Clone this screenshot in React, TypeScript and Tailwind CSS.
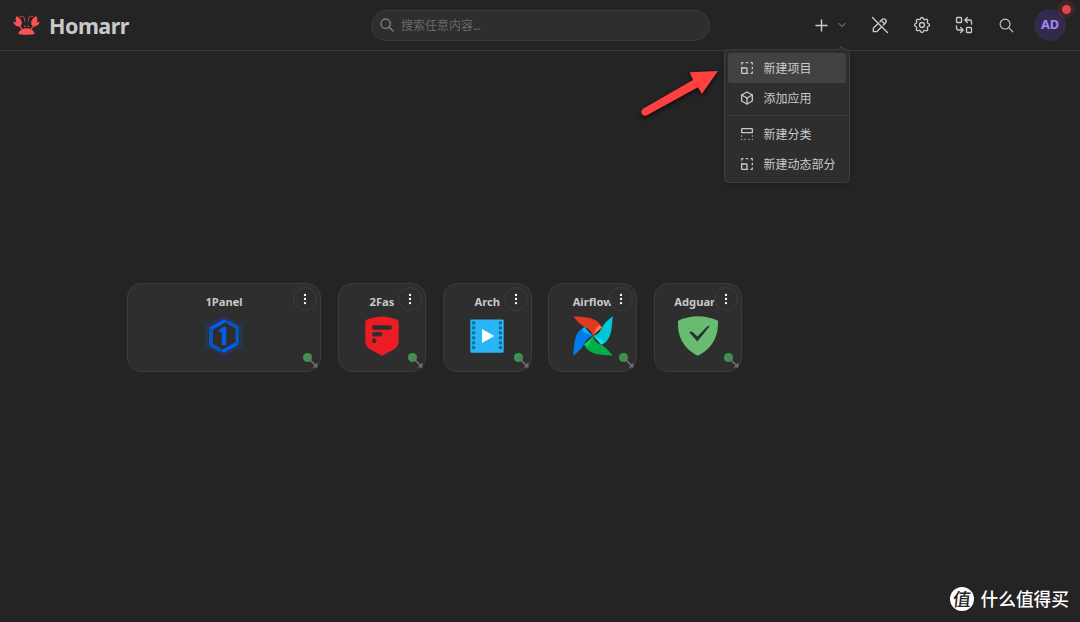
import type { ReactNode } from 'react';
import {
  TbBox,
  TbBoxAlignTop,
  TbChevronDown,
  TbDotsVertical,
  TbPencilOff,
  TbPlus,
  TbReplace,
  TbResize,
  TbSearch,
  TbSettings,
} from 'react-icons/tb';

function HomarrLogo() {
  return (
    <svg viewBox="0 0 28 20" className="h-5 w-7" fill="#fa5252">
      <path d="M5.3 19c.6-3.600 3.800-5.800 8.200-5.800s7.700 2.200 8.200 5.800c-2 .9-14.400.9-16.400 0z" />
      <path d="M3.600 1.200C5.600 2 8.600 4.200 8.800 7.300c.1 2-.7 3.600-1.900 4.200C3.300 11.600.3 9.300.5 6.400l2.900 1.100C2.300 5.300 2.400 2.700 3.600 1.200z" />
      <path d="M23.400 1.200c-2 .8-5 3-5.200 6.100-.1 2 .7 3.600 1.900 4.200 3.600.1 6.600-2.200 6.400-5.100l-2.900 1.100c1.100-2.200 1-4.800-.2-6.300z" />
      <path d="M6.500 2.200C8.500.4 12 .6 11.700 6.500M20.500 2.200C18.500.4 15 .6 15.300 6.500" fill="none" stroke="#fa5252" strokeWidth=".8" />
      <path d="M6.800 11.300l2.400 3M20.200 11.300l-2.400 3" stroke="#fa5252" strokeWidth="1.200" />
      <circle cx="11.700" cy="11.200" r=".7" />
      <circle cx="15.300" cy="11.200" r=".7" />
    </svg>
  );
}

function PanelIcon() {
  return (
    <svg viewBox="0 0 40 40" className="size-10">
      <path d="M20 .7 37.200 10.300v19.400L20 39.300 2.800 29.700V10.300z" fill="none" stroke="#0854c1" strokeWidth=".6" />
      <path d="M5 11.400 20 3l3.800 2.200L8.600 13.800v13.600L5 29.500z" fill="#005eeb" />
      <path d="M5 11.400l3.600 2.400v13.600l9 5.400-1.600 3.200L5 29.500z" fill="#0854c1" />
      <path d="M35 28.600 20 37l-3.800-2.200 15.200-8.600z" fill="#005eeb" />
      <path d="M35 28.600l-3.600-2.400V12.600l-9-5.400L24 4.300l11 6.500z" fill="#0854c1" />
      <path d="M14.800 14.200l4.700-3.200h2.700v18h-4.400V16h-3z" fill="#005eeb" />
    </svg>
  );
}

function TwoFasIcon() {
  return (
    <svg viewBox="0 0 40 40" className="size-10">
      <path
        d="M20 .5c4.300.1 9.500 1.300 14 2.700 2 .7 2.700 1.700 2.700 3.600v17.400c0 4.600-2.200 7.600-6 9.800L20 39.800 9.300 34c-3.800-2.200-6-5.200-6-9.800V6.800c0-1.900.7-2.900 2.700-3.600C10.500 1.800 15.700.6 20 .5z"
        fill="#ed1c24"
      />
      <path d="M12.200 11.500h15.600M12.200 18.300h5.700M12.200 24.800h.1" stroke="#2e2e2e" strokeWidth="4.400" strokeLinecap="round" />
    </svg>
  );
}

const filmHoles = [5.200, 10.200, 15.200, 20.200, 25.200, 30];

function ArchIcon() {
  return (
    <svg viewBox="0 0 40 40" className="size-10">
      <rect x="3.300" y="3.500" width="33.400" height="33.200" rx="1" fill="#29b6f6" />
      {filmHoles.map((y) => (
        <g key={y} fill="#0b6ea0">
          <rect x="5" y={y} width="3.200" height="3.200" rx="1" />
          <rect x="31.800" y={y} width="3.200" height="3.200" rx="1" />
        </g>
      ))}
      <path d="M15 13l12.200 7L15 27z" fill="#fff" />
    </svg>
  );
}

const blades = [
  { angle: 0, dark: '#e43921', light: '#ff7557' },
  { angle: 90, dark: '#00c7d4', light: '#11e1ee' },
  { angle: 180, dark: '#00ad46', light: '#04d659' },
  { angle: 270, dark: '#017cee', light: '#0cb6ff' },
];

function AirflowIcon() {
  return (
    <svg viewBox="0 0 40 40" className="size-10">
      {blades.map(({ angle, dark, light }) => (
        <g key={angle} transform={`rotate(${angle} 20 20)`}>
          <path d="M20 20c.5-4 .5-7 3.500-12 2.500.2 4.500 1.500 5.500 3.500-2 2-6 4.500-9 8.500z" fill={light} />
          <path d="M.3.300C9 1.200 23 .3 28.300 10.300 25.500 8.500 24 10.500 23 13c-.8 2-1.500 4-3 7-1-4-3-6.500-7.500-8.500C8 9.200 3.500 5 .3.300z" fill={dark} />
        </g>
      ))}
      <circle cx="20" cy="20" r=".9" fill="#51504f" />
    </svg>
  );
}

function AdguardIcon() {
  return (
    <svg viewBox="0 0 40 40" className="size-10">
      <path d="M20 .3C26.500.3 34 1.800 40 4.800c0 6.700.8 24.200-20 35C-.8 29-.1 11.500 0 4.800 6 1.800 13.500.3 20 .3z" fill="#68bc71" />
      <path d="M19.300 25.500 11.300 16.200c1-.9 2.600-.8 3.500 0l4.700 4.300 9.700-9.900c.7-.7 1.700-.9 2.500-.4z" fill="#2e2e2e" />
    </svg>
  );
}

interface AppItem {
  name: string;
  icon: ReactNode;
  wide?: boolean;
}

const apps: AppItem[] = [
  { name: '1Panel', icon: <PanelIcon />, wide: true },
  { name: '2Fas', icon: <TwoFasIcon /> },
  { name: 'Arch', icon: <ArchIcon /> },
  { name: 'Airflow', icon: <AirflowIcon /> },
  { name: 'Adguard', icon: <AdguardIcon /> },
];

function AppCard({ name, icon, wide = false }: AppItem) {
  return (
    <div
      className={`relative flex h-[89px] shrink-0 flex-col items-center rounded-[14px] border border-[#3b3b3b] bg-[#2e2e2e] pt-[10px] ${
        wide ? 'w-[193.500px]' : 'w-[88.500px]'
      }`}
    >
      <span className="mb-[6px] text-[11.200px] leading-4 font-bold">{name}</span>
      {icon}
      <button className="absolute top-[3px] right-[3px] flex size-6 items-center justify-center rounded-full border border-[#3d3d3d] bg-[#2e2e2e] text-white">
        <TbDotsVertical className="size-3.5" strokeWidth={2} />
      </button>
      <span className="absolute right-2 bottom-[8.500px] size-[9px] rounded-full bg-[#2f9e44]" />
      <svg viewBox="0 0 12 12" className="absolute right-[2px] bottom-[2.500px] size-3" fill="#6e6e6e">
        <path d="M2.500 2.500l7 7" stroke="#6e6e6e" strokeWidth="1.700" />
        <path d="M0 .500h5.500L.5 6zM11.500 11.500H6.500l5-5z" />
      </svg>
    </div>
  );
}

function MenuItem({ icon, label, active = false }: { icon: ReactNode; label: string; active?: boolean }) {
  return (
    <div className={`flex h-[29.700px] items-center gap-[8.500px] rounded-[3px] pl-[11px] text-[12px] ${active ? 'bg-[#424242]' : ''}`}>
      {icon}
      <span className="pt-[2px] whitespace-nowrap">{label}</span>
    </div>
  );
}

function CreateMenu() {
  return (
    <div className="absolute top-[49px] left-[724px] h-[134px] w-[125.500px] rounded-[4px] border border-[#3d3d3d] bg-[#2e2e2e] p-[3px] shadow-md">
      <span className="absolute -top-[3px] right-[5px] size-[5px] rotate-45 border-t border-l border-[#424242] bg-[#2e2e2e]" />
      <MenuItem icon={<TbResize className="size-4" strokeWidth={2} />} label="新建项目" active />
      <MenuItem icon={<TbBox className="size-4" strokeWidth={2} />} label="添加应用" />
      <div className="my-[3px] h-px bg-[#3d3d3d]" />
      <MenuItem icon={<TbBoxAlignTop className="size-4" strokeWidth={2} />} label="新建分类" />
      <MenuItem icon={<TbResize className="size-4" strokeWidth={2} />} label="新建动态部分" />
    </div>
  );
}

function Header() {
  return (
    <header className="flex h-[51px] items-center border-b border-[#3b3b3b] pl-[13px]">
      <div className="flex w-[358px] items-center gap-2">
        <HomarrLogo />
        <span className="pt-[2px] text-[21.500px] leading-none font-bold tracking-[-0.500px]">Homarr</span>
      </div>
      <div className="flex h-[31px] w-[339px] items-center rounded-full border border-[#3b3b3b] bg-[#2e2e2e] pl-[7px] text-[#696969]">
        <TbSearch className="mr-1.5 size-4 text-[#828282]" />
        <span className="pt-[2px] text-[12px]">
          搜索任意内容<span className="tracking-[-0.900px]">...</span>
        </span>
      </div>
      <div className="ml-[102px] flex items-center">
        <TbPlus className="size-[19px]" strokeWidth={1.800} />
        <TbChevronDown className="ml-[4.500px] size-3 text-[#969696]" />
        <TbPencilOff className="ml-[22.500px] size-5" strokeWidth={1.600} />
        <TbSettings className="ml-[22px] size-5" strokeWidth={1.600} />
        <TbReplace className="ml-[22px] size-5" strokeWidth={1.600} />
        <TbSearch className="ml-[24px] size-[17px]" strokeWidth={1.600} />
        <div className="relative ml-[19px] flex size-8 items-center justify-center rounded-full bg-[#33294a] text-[12.800px] font-bold text-[#a585fb]">
          AD
          <span className="absolute -top-[9px] -right-[9px] flex size-[18px] items-center justify-center rounded-full bg-[#e03131]/15">
            <span className="size-[9px] rounded-full bg-[#e04545]" />
          </span>
        </div>
      </div>
    </header>
  );
}

function PointerArrow() {
  return (
    <svg viewBox="0 0 90 60" className="absolute top-[64px] left-[635px] h-[60px] w-[90px] drop-shadow-[0_2px_2px_rgba(0,0,0,0.700)]">
      <path d="M83 7 66.800 30 63 23.300 12 51.200c-4.800 2.300-8-4-3.500-6.800L58 16l-3.300-7.700z" fill="#ff4040" />
    </svg>
  );
}

function Watermark() {
  return (
    <div className="absolute right-[11px] bottom-[11px] flex items-center gap-[7px] text-white">
      <span className="flex size-[24px] items-center justify-center rounded-full bg-white text-[18px] leading-none font-medium text-[#242424]">
        <span className="-skew-x-6">值</span>
      </span>
      <span className="text-[17.700px] leading-6 font-medium">什么值得买</span>
    </div>
  );
}

export default function App() {
  return (
    <div className="relative h-[622px] w-[1080px] overflow-hidden bg-[#242424] font-['Noto_Sans','Noto_Sans_CJK_SC',sans-serif] text-[#c9c9c9]">
      <Header />
      <main className="flex gap-[16.900px] pt-[231.500px] pl-[127.300px]">
        {apps.map((app) => (
          <AppCard key={app.name} {...app} />
        ))}
      </main>
      <CreateMenu />
      <PointerArrow />
      <Watermark />
    </div>
  );
}
